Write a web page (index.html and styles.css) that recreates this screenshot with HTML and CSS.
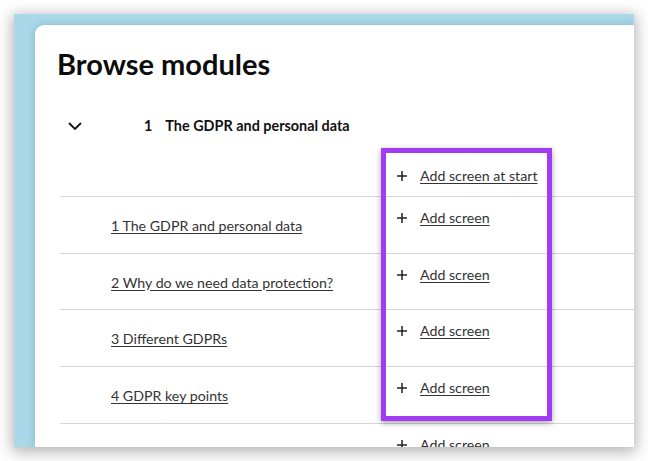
FILE: index.html
```html
<!DOCTYPE html>
<html lang="en">
<head>
<meta charset="utf-8">
<title>Browse modules</title>
<link rel="stylesheet" href="styles.css">
</head>
<body>
<div class="shot">
  <div class="card">
    <h1 class="title">Browse modules</h1>
    <div class="module-head">
      <svg class="chevron" width="14" height="8" viewBox="0 0 14 8"><path d="M1 1 L7 7 L13 1" fill="none" stroke="#111" stroke-width="1.8"/></svg>
      <span class="module-num">1</span>
      <span class="module-name">The GDPR and personal data</span>
    </div>
    <div class="table">
      <div class="row row-start">
        <div class="item"></div>
        <div class="add"><svg class="plus" width="10" height="10" viewBox="0 0 10 10"><path d="M5 0 V10 M0 5 H10" stroke="#222" stroke-width="1.5"/></svg><a href="#">Add screen at start</a></div>
      </div>
      <div class="row">
        <div class="item"><a href="#">1 The GDPR and personal data</a></div>
        <div class="add"><svg class="plus" width="10" height="10" viewBox="0 0 10 10"><path d="M5 0 V10 M0 5 H10" stroke="#222" stroke-width="1.5"/></svg><a href="#">Add screen</a></div>
      </div>
      <div class="row">
        <div class="item"><a href="#">2 Why do we need data protection?</a></div>
        <div class="add"><svg class="plus" width="10" height="10" viewBox="0 0 10 10"><path d="M5 0 V10 M0 5 H10" stroke="#222" stroke-width="1.5"/></svg><a href="#">Add screen</a></div>
      </div>
      <div class="row">
        <div class="item"><a href="#">3 Different GDPRs</a></div>
        <div class="add"><svg class="plus" width="10" height="10" viewBox="0 0 10 10"><path d="M5 0 V10 M0 5 H10" stroke="#222" stroke-width="1.5"/></svg><a href="#">Add screen</a></div>
      </div>
      <div class="row">
        <div class="item"><a href="#">4 GDPR key points</a></div>
        <div class="add"><svg class="plus" width="10" height="10" viewBox="0 0 10 10"><path d="M5 0 V10 M0 5 H10" stroke="#222" stroke-width="1.5"/></svg><a href="#">Add screen</a></div>
      </div>
      <div class="row">
        <div class="item"></div>
        <div class="add"><svg class="plus" width="10" height="10" viewBox="0 0 10 10"><path d="M5 0 V10 M0 5 H10" stroke="#222" stroke-width="1.5"/></svg><a href="#">Add screen</a></div>
      </div>
    </div>
    <div class="highlight"></div>
  </div>
</div>
</body>
</html>
```

FILE: styles.css
```css
html, body {
  margin: 0;
  padding: 0;
  background: #ffffff;
}
body {
  width: 648px;
  height: 461px;
  overflow: hidden;
  font-family: Lato, "Noto Sans", sans-serif;
  color: #222;
}
.shot {
  margin: 14px 0 0 14px;
  width: 620px;
  height: 433px;
  box-sizing: border-box;
  padding: 11px 0 0 21px;
  background: #a9d9e9;
  box-shadow: 0 3px 14px 2px rgba(0, 0, 0, 0.3);
  overflow: hidden;
}
.card {
  position: relative;
  height: 100%;
  box-sizing: border-box;
  padding: 22px 0 0 22px;
  background: #ffffff;
  border-top-left-radius: 9px;
  box-shadow: 0 0 9px rgba(0, 50, 80, 0.22);
}
.title {
  margin: 0;
  font-size: 29px;
  line-height: 34px;
  font-weight: 700;
  color: #0b0c0c;
}
.module-head {
  display: flex;
  align-items: center;
  margin-top: 34px;
  height: 20px;
  font-size: 14.4px;
  font-weight: 700;
  color: #111;
}
.chevron {
  margin-left: 11px;
  margin-top: 2px;
}
.module-num {
  margin-left: 62px;
}
.module-name {
  margin-left: 13px;
}
.table {
  margin-left: 3px;
}
.row {
  display: flex;
  align-items: flex-start;
  height: 55.7px;
  border-bottom: 1px solid #d6d6d6;
}
.row-start {
  height: 61px;
}
.item {
  width: 321px;
  box-sizing: border-box;
  padding: 19px 0 0 51px;
  font-size: 14.2px;
  line-height: 20px;
}
.add {
  display: flex;
  align-items: center;
  padding: 11px 0 0 16px;
  font-size: 14.2px;
  line-height: 20px;
}
.row-start .add {
  padding-top: 31px;
}
.plus {
  margin-right: 13px;
}
.table a {
  color: #333;
  text-decoration: underline;
  text-underline-offset: 2px;
}
.highlight {
  position: absolute;
  left: 346px;
  top: 123px;
  width: 171px;
  height: 273px;
  box-sizing: border-box;
  border: 5px solid #a23cf3;
  box-shadow: 0 2px 6px rgba(0, 0, 0, 0.35);
}
```
